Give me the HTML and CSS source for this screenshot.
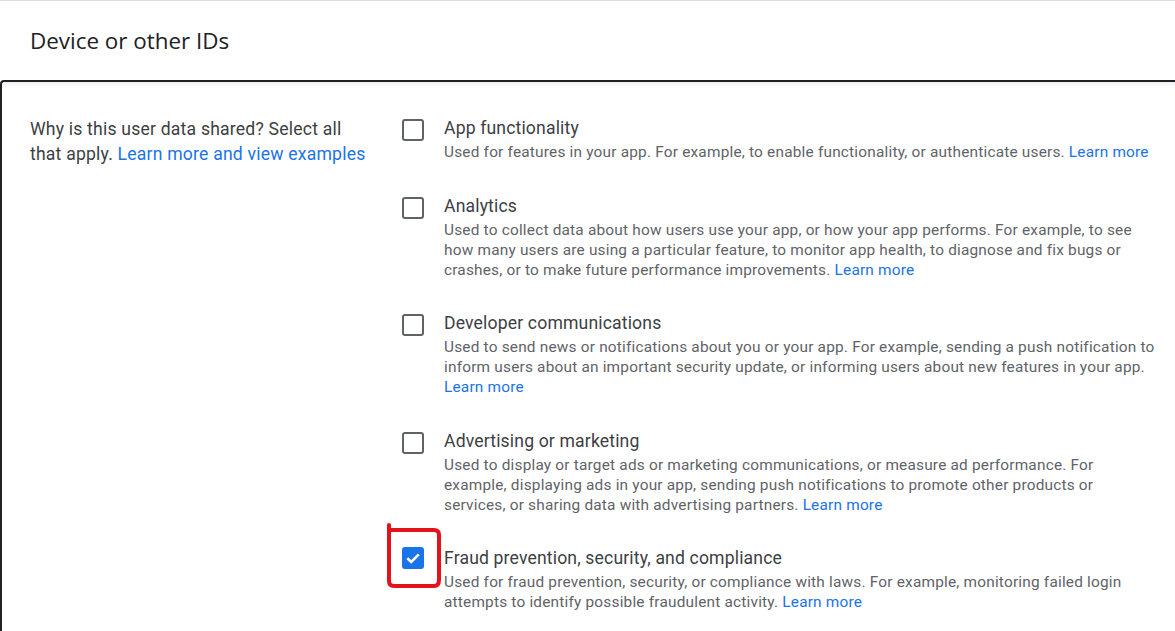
FILE: index.html
```html
<!DOCTYPE html>
<html>
<head>
<meta charset="utf-8">
<link rel="stylesheet" href="styles.css">
</head>
<body>
<div class="page">
  <header class="section-head">
    <h2 class="section-title">Device or other IDs</h2>
  </header>
  <section class="card">
    <div class="question">
      Why is this user data shared? Select all that apply. <a class="link" href="#">Learn more and view examples</a>
    </div>
    <ul class="options">
      <li class="option">
        <span class="checkbox"></span>
        <div class="option-text">
          <div class="option-title">App functionality</div>
          <div class="option-desc">Used for features in your app. For example, to enable functionality, or authenticate users. <a class="link" href="#">Learn more</a></div>
        </div>
      </li>
      <li class="option">
        <span class="checkbox"></span>
        <div class="option-text">
          <div class="option-title">Analytics</div>
          <div class="option-desc">Used to collect data about how users use your app, or how your app performs. For example, to see how many users are using a particular feature, to monitor app health, to diagnose and fix bugs or crashes, or to make future performance improvements. <a class="link" href="#">Learn more</a></div>
        </div>
      </li>
      <li class="option">
        <span class="checkbox"></span>
        <div class="option-text">
          <div class="option-title">Developer communications</div>
          <div class="option-desc">Used to send news or notifications about you or your app. For example, sending a push notification to inform users about an important security update, or informing users about new features in your app. <a class="link" href="#">Learn more</a></div>
        </div>
      </li>
      <li class="option">
        <span class="checkbox"></span>
        <div class="option-text">
          <div class="option-title">Advertising or marketing</div>
          <div class="option-desc">Used to display or target ads or marketing communications, or measure ad performance. For example, displaying ads in your app, sending push notifications to promote other products or services, or sharing data with advertising partners. <a class="link" href="#">Learn more</a></div>
        </div>
      </li>
      <li class="option">
        <span class="checkbox checked">
          <svg class="check" viewBox="0 0 22 22" width="22" height="22"><path d="M5.3 11.3 L9.2 15 L16.8 7.4" fill="none" stroke="#fff" stroke-width="2.6"/></svg>
          <svg class="annotation" viewBox="0 0 60 68" width="60" height="68"><path d="M4 2 L4 6 L4 58 Q4 63 9 63 L49 63 Q54 63 54 57 L54 12 Q54 7 49 7 L4 7" fill="none" stroke="#e3131b" stroke-width="4" stroke-linecap="round" stroke-linejoin="round"/></svg>
        </span>
        <div class="option-text">
          <div class="option-title">Fraud prevention, security, and compliance</div>
          <div class="option-desc">Used for fraud prevention, security, or compliance with laws. For example, monitoring failed login attempts to identify possible fraudulent activity. <a class="link" href="#">Learn more</a></div>
        </div>
      </li>
    </ul>
  </section>
</div>
</body>
</html>
```

FILE: styles.css
```css
html, body {
  margin: 0;
  padding: 0;
  background: #fff;
}

.page {
  width: 1175px;
  height: 631px;
  overflow: hidden;
  font-family: Roboto, "Liberation Sans", Arial, sans-serif;
  border-top: 1px solid #dadce0;
  box-sizing: border-box;
}

.section-head {
  height: 79px;
  display: flex;
  align-items: center;
  padding-left: 30px;
  box-sizing: border-box;
}

.section-title {
  margin: 0;
  padding-bottom: 1px;
  font-family: "Open Sans", Roboto, sans-serif;
  font-weight: 400;
  font-size: 22.4px;
  color: #202124;
}

.card {
  display: flex;
  border-top: 2px solid #202124;
  border-left: 2px solid #202124;
  border-top-left-radius: 4px;
  box-shadow: inset 0 5px 5px -3px rgba(0, 0, 0, 0.08);
  padding: 32px 0 0 28px;
  min-height: 560px;
  box-sizing: border-box;
}

.question {
  width: 342px;
  flex: none;
  font-size: 17.6px;
  line-height: 25px;
  letter-spacing: 0.2px;
  color: #3c4043;
  margin-top: 2.5px;
}

.link {
  color: #1a73e8;
  text-decoration: none;
}

.options {
  list-style: none;
  margin: 0 0 0 30px;
  padding: 0;
  display: flex;
  flex-direction: column;
  gap: 29.5px;
}

.option {
  display: flex;
  align-items: flex-start;
}

.checkbox {
  position: relative;
  flex: none;
  width: 22px;
  height: 22px;
  margin-top: 5px;
  box-sizing: border-box;
  border: 2.3px solid #5f6368;
  border-radius: 3px;
}

.checkbox.checked {
  background: #1a73e8;
  border: none;
  margin-top: 3px;
}

.check {
  display: block;
}

.annotation {
  position: absolute;
  left: -17px;
  top: -24px;
  pointer-events: none;
}

.option-text {
  margin-left: 20px;
  width: 714px;
}

.option-title {
  font-size: 17.6px;
  line-height: 28px;
  letter-spacing: 0.15px;
  color: #3c4043;
}

.option-desc {
  font-size: 15.4px;
  line-height: 20px;
  color: #5f6368;
  letter-spacing: 0.2px;
}
```
